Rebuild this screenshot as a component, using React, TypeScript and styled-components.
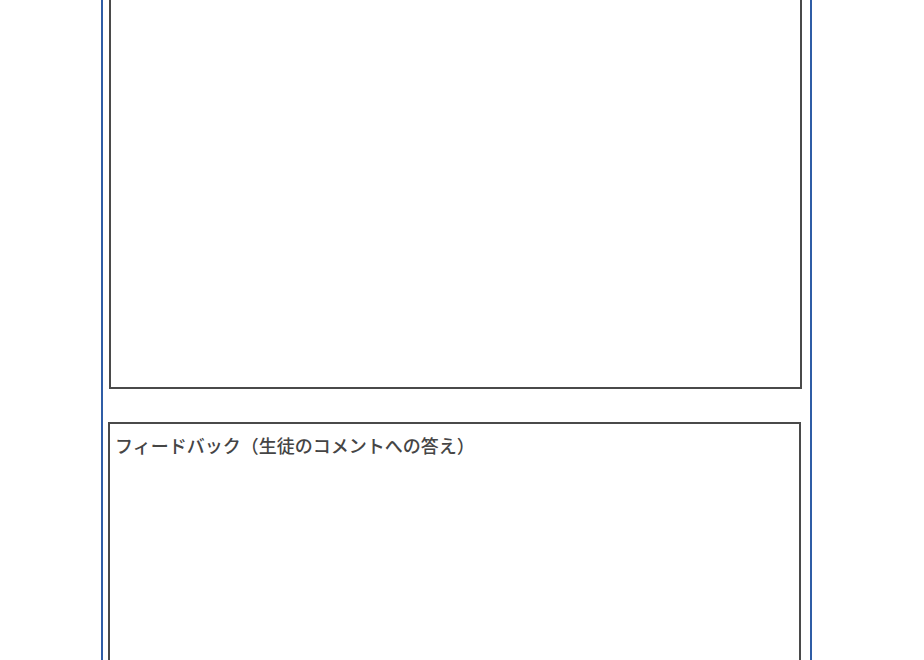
import React from 'react';
import styled, { createGlobalStyle } from 'styled-components';

const GlobalStyle = createGlobalStyle`
  html, body {
    margin: 0;
    padding: 0;
    background: #ffffff;
    overflow: hidden;
  }
  body {
    font-family: "Noto Sans CJK JP", "Noto Sans", sans-serif;
  }
`;

// cadre bleu de la feuille
const Sheet = styled.div`
  box-sizing: border-box;
  width: 711px;
  margin: -20px 0 0 101px;
  border-left: 2px solid #2f5da6;
  border-right: 2px solid #2f5da6;
  padding: 0 8px 0 5px;
  height: 680px;
  overflow: hidden;
  display: flex;
  flex-direction: column;
  gap: 33px;
`;

const Panel = styled.div<{ $shift?: number }>`
  box-sizing: border-box;
  width: 693px;
  margin-left: ${p => p.$shift ?? 0}px;
  border: 2px solid #4a4a4a;
  background: #fff;
  flex-shrink: 0;
`;

const AnswerArea = styled(Panel)`
  height: 409px;
`;

const FeedbackArea = styled(Panel)`
  height: 300px;
  padding: 8px 5px;
`;

const Label = styled.div`
  font-size: 18px;
  line-height: 26px;
  font-weight: 500;
  color: #454545;
`;

export default function App() {
  return (
    <>
      <GlobalStyle />
      <Sheet>
        <AnswerArea $shift={1} />
        <FeedbackArea>
          <Label>フィードバック（生徒のコメントへの答え）</Label>
        </FeedbackArea>
      </Sheet>
    </>
  );
}
